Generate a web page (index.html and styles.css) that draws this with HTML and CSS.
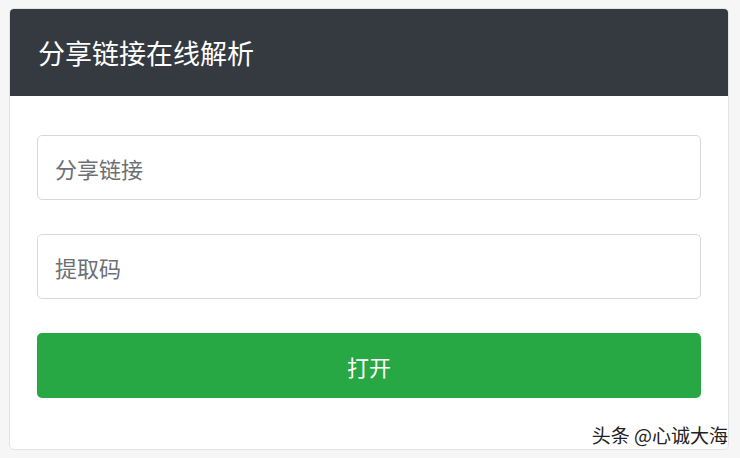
FILE: index.html
```html
<!DOCTYPE html>
<html lang="zh">
<head>
<meta charset="utf-8">
<link rel="stylesheet" href="styles.css">
</head>
<body>
<div class="card">
  <div class="card-header">分享链接在线解析</div>
  <div class="card-body">
    <div class="field">分享链接</div>
    <div class="field">提取码</div>
    <div class="btn">打开</div>
  </div>
</div>
<div class="watermark">头条 @心诚大海</div>
</body>
</html>
```
FILE: styles.css
```css
html, body {
  margin: 0;
  padding: 0;
  background: #f6f6f7;
  font-family: "Noto Sans CJK SC", "Noto Sans", sans-serif;
}
body {
  width: 740px;
  height: 458px;
  position: relative;
  overflow: hidden;
  padding: 8px 0 0 9px;
  box-sizing: border-box;
}
.card {
  width: 720px;
  height: 442px;
  background: #ffffff;
  border: 1px solid #e1e3e6;
  border-radius: 5px;
  box-sizing: border-box;
  overflow: hidden;
  display: flex;
  flex-direction: column;
}
.card-header {
  height: 87px;
  background: #343a40;
  color: #ffffff;
  font-size: 27px;
  display: flex;
  align-items: center;
  padding-left: 28px;
  flex-shrink: 0;
}
.card-body {
  padding: 39px 27px 0 27px;
  display: flex;
  flex-direction: column;
  gap: 34px;
}
.field {
  height: 65px;
  border: 1px solid #d6d9dc;
  border-radius: 5px;
  box-sizing: border-box;
  display: flex;
  align-items: center;
  padding-left: 17px;
  font-size: 22px;
  color: #6c6f73;
}
.btn {
  height: 65px;
  background: #28a745;
  border-radius: 5px;
  color: #ffffff;
  font-size: 22px;
  display: flex;
  align-items: center;
  justify-content: center;
}
.watermark {
  position: absolute;
  right: 12px;
  top: 421px;
  font-size: 19px;
  color: #222;
  text-shadow: 0 0 2px #fff, 0 0 2px #fff;
}
```
